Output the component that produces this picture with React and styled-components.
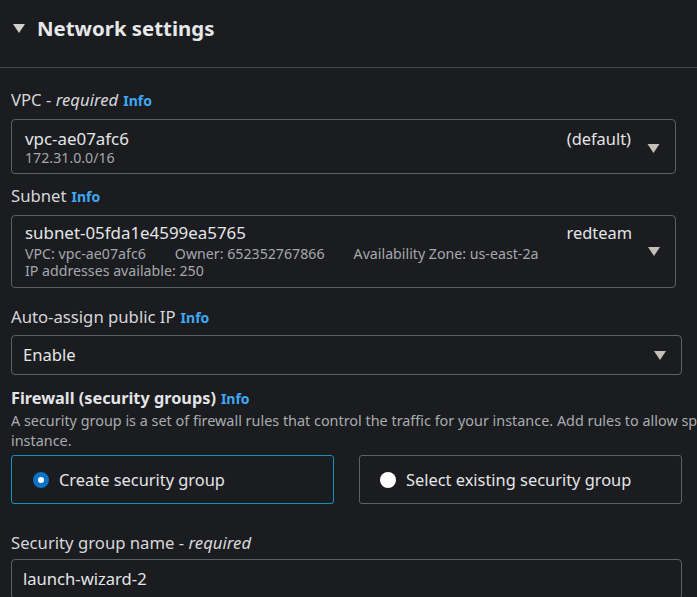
import React from "react";
import styled, { createGlobalStyle } from "styled-components";

const GlobalStyle = createGlobalStyle`
  html, body { margin: 0; padding: 0; background: #1b1c1f; }
  body {
    overflow: hidden;
    font-family: "Noto Sans", "Open Sans", sans-serif;
    color: #d5d7da;
  }
`;

const Page = styled.div`
  width: 697px;
  height: 597px;
  overflow: hidden;
  background: #1b1c1f;
`;

const Header = styled.header`
  height: 68px;
  box-sizing: border-box;
  padding: 16px 0 0 13px;
  border-bottom: 1px solid #414347;
  display: flex;
  align-items: flex-start;
  gap: 12px;
`;

const HeaderCaret = styled.svg`
  margin-top: 8px;
  flex: none;
`;

const Title = styled.h2`
  margin: 0;
  font-size: 20.4px;
  line-height: 24px;
  font-weight: 700;
  color: #e6e8ea;
`;

const Content = styled.div`
  padding: 22px 0 0 11px;
  width: 900px;
`;

const Field = styled.div`
  margin-top: ${(p) => p.$gap || 0}px;
  width: ${(p) => p.$width || 671}px;
`;

const Label = styled.div`
  font-size: ${(p) => (p.$strong ? 16.3 : 16.7)}px;
  line-height: 20px;
  color: ${(p) => (p.$strong ? "#e3e5e8" : "#d5d7da")};
  font-weight: ${(p) => (p.$strong ? 700 : 400)};
  margin-bottom: ${(p) => (p.$mb !== undefined ? p.$mb : 8)}px;
  white-space: nowrap;
`;

const Req = styled.i`
  font-style: italic;
`;

const Info = styled.a`
  font-size: 14px;
  font-weight: 700;
  color: #3ea8f5;
  margin-left: 5px;
  text-decoration: none;
`;

const Select = styled.div`
  box-sizing: border-box;
  border: 1px solid #5d6066;
  border-radius: 4px;
  display: flex;
  align-items: center;
  gap: 16px;
  padding: ${(p) => p.$pad || "0 15px 0 11px"};
  min-height: ${(p) => p.$h || 40}px;
`;

const Main = styled.div`
  flex: 1;
  min-width: 0;
`;

const TopLine = styled.div`
  display: flex;
  justify-content: space-between;
  align-items: center;
  font-size: 16.9px;
  line-height: 20px;
  color: #e3e5e8;
  margin-bottom: ${(p) => p.$mb || 0}px;
`;

const Tag = styled.span`
  font-size: 16.4px;
  color: #e3e5e8;
`;

const Sub = styled.div`
  font-size: 14.2px;
  line-height: ${(p) => p.$lh || 17}px;
  color: #a4a8ad;
  display: flex;
  gap: 29px;
  white-space: nowrap;
`;

const Value = styled.span`
  font-size: 16.6px;
  line-height: 20px;
  color: #e3e5e8;
`;

const Caret = ({ size = 12 }) => (
  <svg width={size} height={9} viewBox="0 0 12 9" style={{ flex: "none" }}>
    <path d="M0 0 H12 L6 9 Z" fill="#c4c0b8" />
  </svg>
);

const Description = styled.p`
  margin: 0;
  width: 880px;
  font-size: 14.4px;
  line-height: 20px;
  color: #a9acb0;
`;

const Tiles = styled.div`
  margin-top: 4px;
  display: grid;
  grid-template-columns: 323px 323px;
  column-gap: 25px;
`;

const Tile = styled.label`
  box-sizing: border-box;
  height: 49px;
  border: 1px solid ${(p) => (p.$selected ? "#1591bf" : "#5d6066")};
  border-radius: 3px;
  display: flex;
  align-items: center;
  gap: 10px;
  padding-left: ${(p) => (p.$selected ? 21 : 20)}px;
  font-size: 16.4px;
  color: #e3e5e8;
`;

const Radio = styled.span`
  box-sizing: border-box;
  width: 16px;
  height: 16px;
  border-radius: 50%;
  flex: none;
  background: #ffffff;
  border: ${(p) => (p.$checked ? "5px solid #0b73c7" : "none")};
`;

export default function App() {
  return (
    <Page>
      <GlobalStyle />
      <Header>
        <HeaderCaret width="12" height="9" viewBox="0 0 12 9">
          <path d="M0 0 H12 L6 9 Z" fill="#d2d0cb" />
        </HeaderCaret>
        <Title>Network settings</Title>
      </Header>

      <Content>
        <Field $width={665}>
          <Label>
            VPC - <Req>required</Req>
            <Info>Info</Info>
          </Label>
          <Select $pad="9px 15px 6px 13px" $h={55}>
            <Main>
              <TopLine>
                <span>vpc-ae07afc6</span>
                <Tag>(default)</Tag>
              </TopLine>
              <Sub $lh={18}>172.31.0.0/16</Sub>
            </Main>
            <Caret size={13} />
          </Select>
        </Field>

        <Field $width={665} $gap={12}>
          <Label>
            Subnet<Info>Info</Info>
          </Label>
          <Select $pad="7px 15px 8px 13px" $h={73}>
            <Main>
              <TopLine $mb={2}>
                <span>subnet-05fda1e4599ea5765</span>
                <Tag>redteam</Tag>
              </TopLine>
              <Sub>
                <span>VPC: vpc-ae07afc6</span>
                <span>Owner: 652352767866</span>
                <span>Availability Zone: us-east-2a</span>
              </Sub>
              <Sub>IP addresses available: 250</Sub>
            </Main>
            <Caret />
          </Select>
        </Field>

        <Field $gap={19}>
          <Label $mb={7}>
            Auto-assign public IP<Info>Info</Info>
          </Label>
          <Select>
            <Main>
              <Value>Enable</Value>
            </Main>
            <Caret />
          </Select>
        </Field>

        <Field $gap={13} $width={900}>
          <Label $strong $mb={2}>
            Firewall (security groups)<Info>Info</Info>
          </Label>
          <Description>
            A security group is a set of firewall rules that control the traffic for your instance. Add rules to allow
            specific traffic to reach your instance.
          </Description>
          <Tiles>
            <Tile $selected>
              <Radio $checked />
              Create security group
            </Tile>
            <Tile>
              <Radio />
              Select existing security group
            </Tile>
          </Tiles>
        </Field>

        <Field $gap={29}>
          <Label $mb={6}>
            Security group name - <Req>required</Req>
          </Label>
          <Select>
            <Value>launch-wizard-2</Value>
          </Select>
        </Field>
      </Content>
    </Page>
  );
}
